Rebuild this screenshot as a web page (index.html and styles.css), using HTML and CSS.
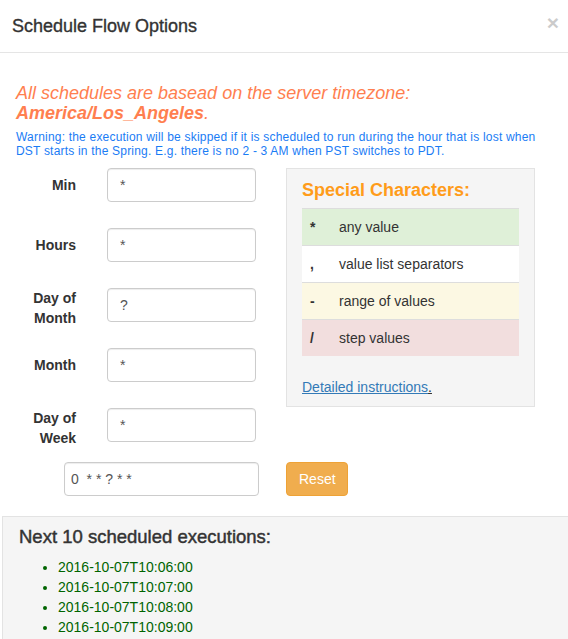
FILE: index.html
```html
<!DOCTYPE html>
<html>
<head>
<meta charset="utf-8">
<link rel="stylesheet" href="styles.css">
</head>
<body>
<div class="modal">
  <div class="modal-header">
    <h4 class="modal-title">Schedule Flow Options</h4>
    <span class="close">×</span>
  </div>
  <div class="modal-body">
    <p class="tz">All schedules are basead on the server timezone:<br><b>America/Los_Angeles</b>.</p>
    <p class="warn">Warning: the execution will be skipped if it is scheduled to run during the hour that is lost when DST starts in the Spring. E.g. there is no 2 - 3 AM when PST switches to PDT.</p>
    <div class="layout">
      <div class="fields">
        <div class="row"><label class="lbl">Min</label><input class="field" value="*"></div>
        <div class="row"><label class="lbl">Hours</label><input class="field" value="*"></div>
        <div class="row"><label class="lbl two">Day of<br>Month</label><input class="field" value="?"></div>
        <div class="row"><label class="lbl">Month</label><input class="field" value="*"></div>
        <div class="row"><label class="lbl two">Day of<br>Week</label><input class="field" value="*"></div>
      </div>
      <div class="special">
        <h4 class="special-title">Special Characters:</h4>
        <table class="chars">
          <tr class="success"><td class="sym">*</td><td>any value</td></tr>
          <tr><td class="sym">,</td><td>value list separators</td></tr>
          <tr class="warning"><td class="sym">-</td><td>range of values</td></tr>
          <tr class="danger"><td class="sym">/</td><td>step values</td></tr>
        </table>
        <p class="instr"><a href="#">Detailed instructions</a>.</p>
      </div>
      <div class="cron-cell"><input class="field cron" value="0  * * ? * *"></div>
      <div class="btn-cell"><button class="btn-reset">Reset</button></div>
    </div>
  </div>
  <div class="next">
    <h4 class="next-title">Next 10 scheduled executions:</h4>
    <ul class="next-list">
      <li>2016-10-07T10:06:00</li>
      <li>2016-10-07T10:07:00</li>
      <li>2016-10-07T10:08:00</li>
      <li>2016-10-07T10:09:00</li>
    </ul>
  </div>
</div>
</body>
</html>
```
FILE: styles.css
```css
html, body {
  margin: 0;
  padding: 0;
  background: #fff;
}
body {
  font-family: "Liberation Sans", Arial, sans-serif;
  font-size: 14px;
  line-height: 20px;
  color: #333;
  overflow: hidden;
}
.modal {
  width: 568px;
}
.modal-header {
  display: flex;
  justify-content: space-between;
  align-items: flex-start;
  padding: 15px 12px 15px 12px;
  height: 22px;
  border-bottom: 1px solid #e5e5e5;
}
.modal-title {
  margin: 0;
  font-size: 18px;
  font-weight: normal;
  line-height: 22px;
  color: #333;
  -webkit-text-stroke: 0.35px #333;
}
.close {
  font-size: 21px;
  font-weight: bold;
  line-height: 16px;
  color: #000;
  opacity: 0.2;
  margin-right: -3px;
}
.modal-body {
  padding: 30px 16px 0 16px;
}
.tz {
  margin: 0;
  font-size: 18px;
  line-height: 20px;
  font-style: italic;
  color: #ff7f50;
}
.tz b {
  font-weight: bold;
}
.warn {
  margin: 7px 0 0 0;
  font-size: 12px;
  line-height: 14px;
  letter-spacing: 0.2px;
  color: #1a7cf5;
}
.layout {
  display: grid;
  grid-template-columns: 270px 249px;
  row-gap: 20px;
  margin-top: 10px;
}
.fields {
  display: flex;
  flex-direction: column;
  gap: 26px;
}
.row {
  display: flex;
  align-items: flex-start;
  height: 34px;
}
.lbl {
  width: 60px;
  text-align: right;
  font-weight: bold;
  padding-top: 7px;
  line-height: 20px;
  margin-right: 31px;
  flex: none;
}
.lbl.two {
  padding-top: 0;
}
.field {
  box-sizing: border-box;
  height: 34px;
  width: 149px;
  padding: 6px 12px;
  font-family: "Liberation Sans", Arial, sans-serif;
  font-size: 14px;
  line-height: 20px;
  color: #555;
  border: 1px solid #ccc;
  border-radius: 4px;
  box-shadow: inset 0 1px 1px rgba(0,0,0,0.075);
  background: #fff;
  margin: 0;
}
.special {
  box-sizing: border-box;
  height: 239px;
  background: #f5f5f5;
  border: 1px solid #e3e3e3;
  padding: 10px 15px;
}
.special-title {
  margin: 1px 0 8px 0;
  font-size: 18px;
  line-height: 20px;
  font-weight: bold;
  color: #ff9c1a;
}
.chars {
  width: 100%;
  border-collapse: collapse;
  background: #fff;
}
.chars td {
  padding: 8px;
  line-height: 20px;
  border-top: 1px solid #ddd;
}
.chars td.sym {
  width: 13px;
  font-weight: bold;
}
.chars tr.success td { background: #dff0d8; }
.chars tr.warning td { background: #fcf8e3; }
.chars tr.danger td { background: #f2dede; }
.instr {
  margin: 21px 0 0 0;
  text-decoration: underline;
}
.instr a {
  color: #337ab7;
}
.cron-cell {
  padding-left: 48px;
}
.cron {
  width: 195px;
  padding-left: 6px;
  font-size: 14px;
}
.btn-reset {
  box-sizing: border-box;
  height: 34px;
  width: 62px;
  padding: 6px 12px;
  font-family: "Liberation Sans", Arial, sans-serif;
  font-size: 14px;
  line-height: 20px;
  color: #fff;
  background: #f0ad4e;
  border: 1px solid #eea236;
  border-radius: 4px;
}
.next {
  margin: 20px 0 0 2px;
  background: #f5f5f5;
  border-top: 1px solid #e3e3e3;
  border-left: 1px solid #e3e3e3;
  padding: 10px 16px 20px 16px;
}
.next-title {
  margin: 0;
  font-size: 18.5px;
  line-height: 20px;
  font-weight: normal;
  color: #333;
  -webkit-text-stroke: 0.45px #333;
}
.next-list {
  margin: 10px 0 0 0;
  padding-left: 39px;
  color: #006400;
}
.next-list li {
  line-height: 20px;
}
```
